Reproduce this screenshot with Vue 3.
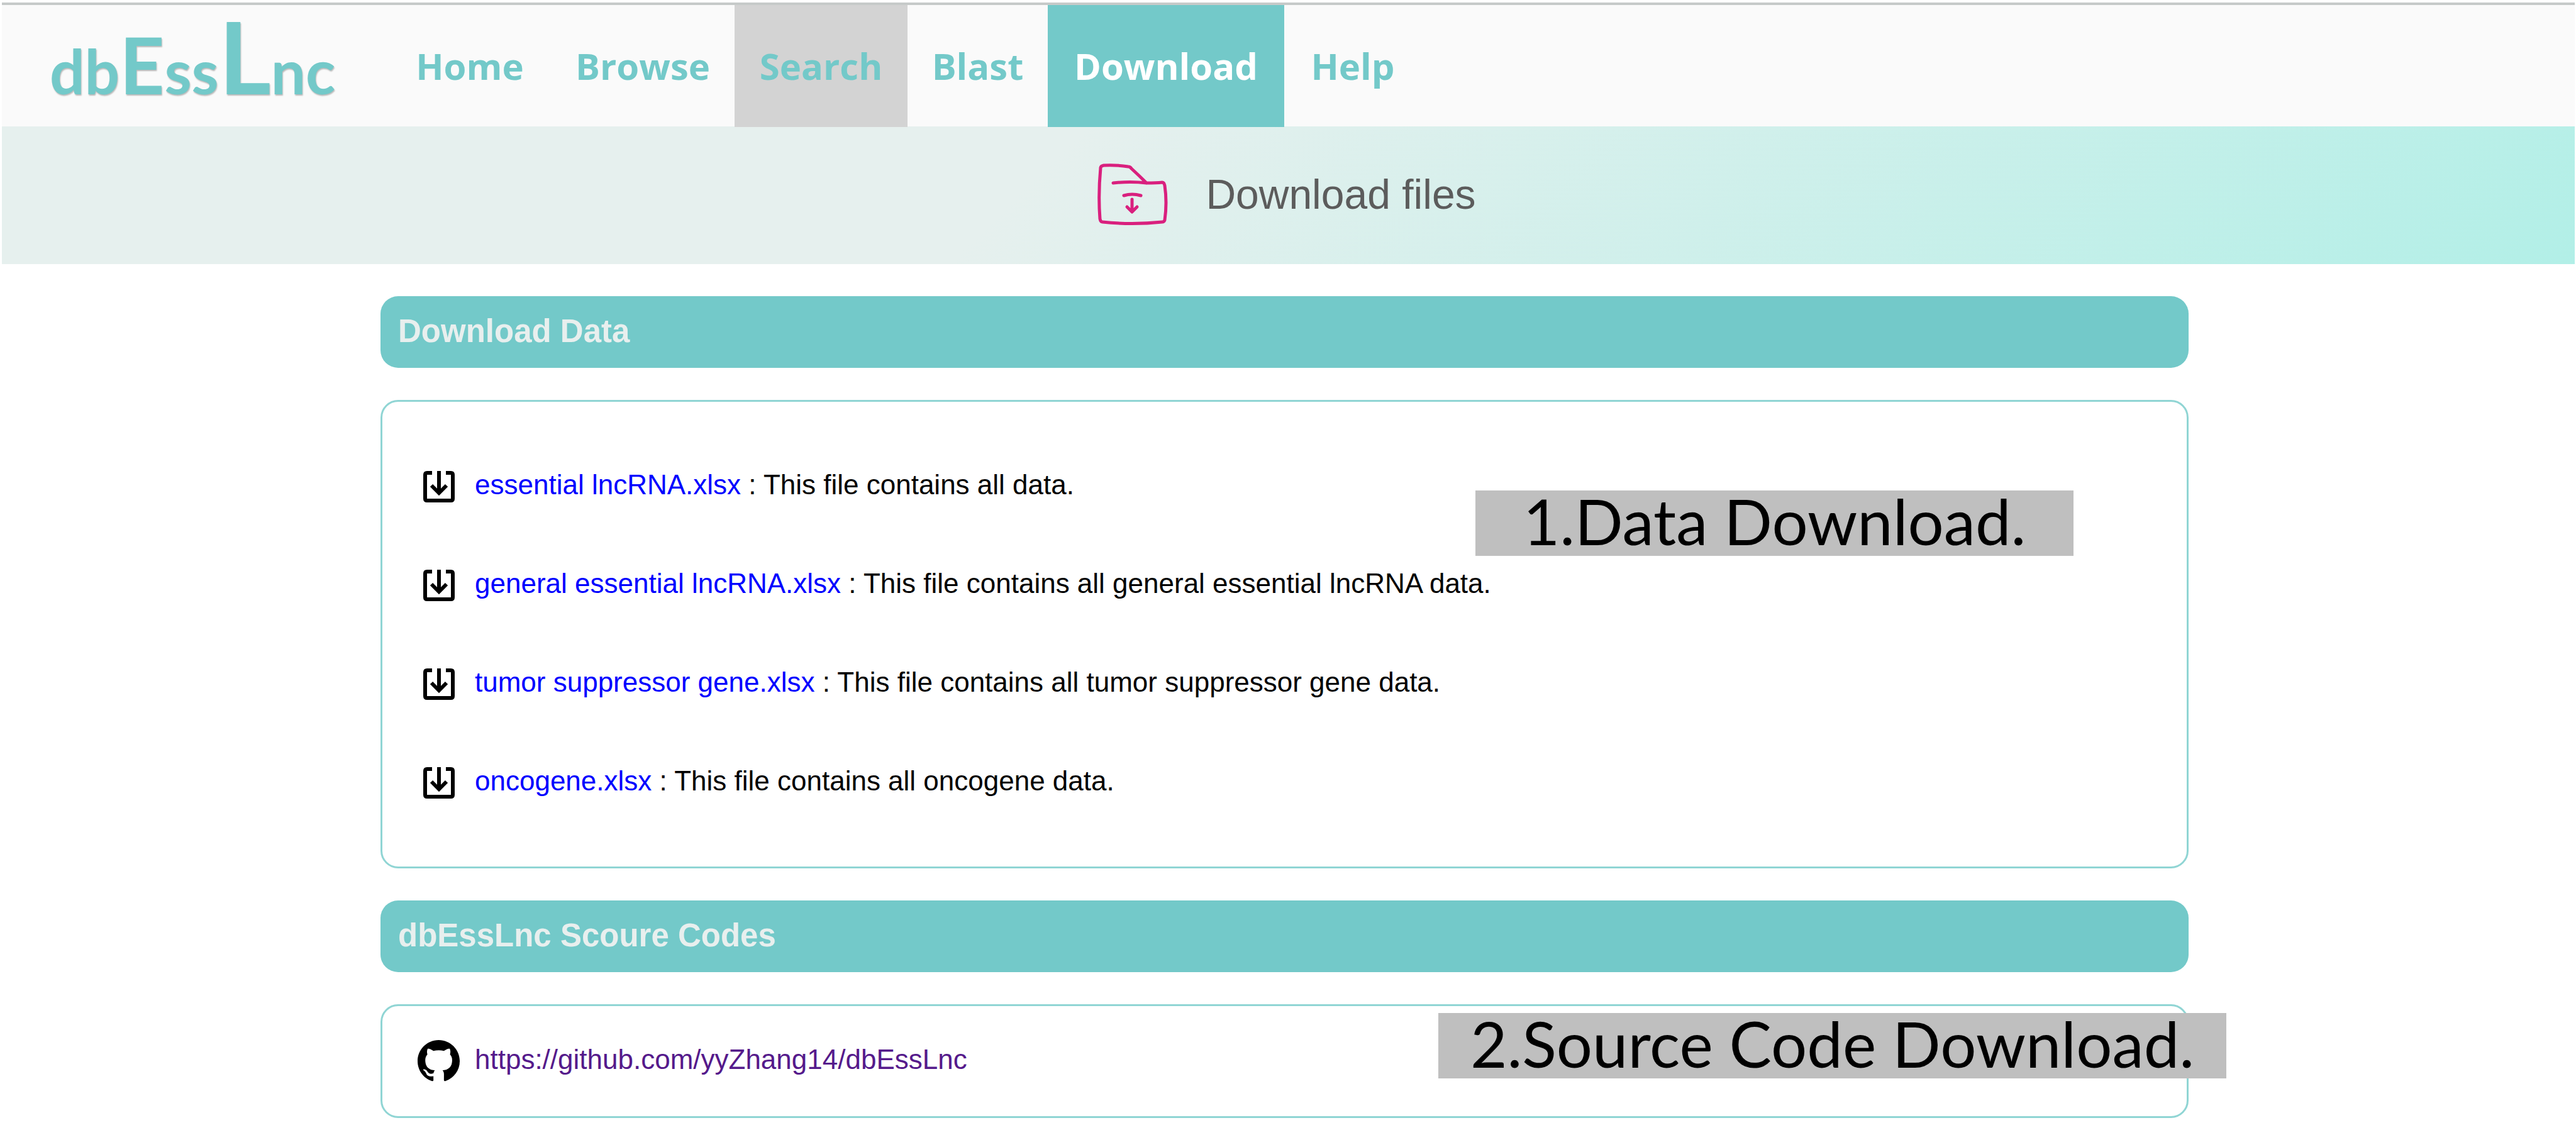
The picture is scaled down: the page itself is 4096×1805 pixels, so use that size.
<script setup>
const links = [
  { label: 'Home', state: '' },
  { label: 'Browse', state: '' },
  { label: 'Search', state: 'hovered' },
  { label: 'Blast', state: '' },
  { label: 'Download', state: 'active' },
  { label: 'Help', state: '' },
]

const files = [
  { name: 'essential lncRNA.xlsx', text: 'This file contains all data.' },
  { name: 'general essential lncRNA.xlsx', text: 'This file contains all general essential lncRNA data.' },
  { name: 'tumor suppressor gene.xlsx', text: 'This file contains all tumor suppressor gene data.' },
  { name: 'oncogene.xlsx', text: 'This file contains all oncogene data.' },
]
</script>

<template>
  <div class="page">
    <header class="topbar">
      <a class="logo" href="#" aria-label="dbEssLnc">
        <span>db</span><span class="tall">E</span><span>ss</span><span class="cap">L</span><span>nc</span>
      </a>
      <nav class="menu">
        <a v-for="link in links" :key="link.label" href="#" :class="link.state">{{ link.label }}</a>
      </nav>
    </header>

    <div class="banner">
      <svg class="folder" viewBox="0 0 112 98" aria-hidden="true">
        <path d="M25 31Q52 28 78 31Q94 31 103 30Q106 30 107 35Q111 62 107 90Q106 93 103 93Q55 98 8 93Q5 93 4 88Q1 50 5 7Q5 4 10 3Q30 2 49 5Q52 5 54 8Q66 19 78 31" />
        <path d="M42 51Q55 47 69 51M55 57V76M47 69L55 77L63 69" />
      </svg>
      <h1>Download files</h1>
    </div>

    <main class="content">
      <h2>Download Data</h2>
      <section class="card">
        <ul>
          <li v-for="file in files" :key="file.name" class="row">
            <span class="icon">
              <svg class="save" viewBox="0 0 50 50" aria-hidden="true">
                <path d="M14 3H6Q3 3 3 6V44Q3 47 6 47H44Q47 47 47 44V6Q47 3 44 3H36M25 0V35M13 23L25 35L37 23" />
              </svg>
            </span>
            <p><a href="#">{{ file.name }}</a> : {{ file.text }}</p>
          </li>
        </ul>
        <div class="note note-data">1.Data Download.</div>
      </section>

      <h2>dbEssLnc Scoure Codes</h2>
      <section class="card card-code">
        <div class="row">
          <span class="icon">
            <svg class="github" viewBox="0 0 16 16" aria-hidden="true">
              <path d="M8 0C3.58 0 0 3.58 0 8c0 3.54 2.29 6.53 5.47 7.59.4.07.55-.17.55-.38 0-.19-.01-.82-.01-1.49-2.01.37-2.53-.49-2.69-.94-.09-.23-.48-.94-.82-1.13-.28-.15-.68-.52-.01-.53.63-.01 1.08.58 1.23.82.72 1.21 1.87.87 2.33.66.07-.52.28-.87.51-1.07-1.78-.2-3.64-.89-3.64-3.95 0-.87.31-1.59.82-2.15-.08-.2-.36-1.02.08-2.12 0 0 .67-.21 2.2.82.64-.18 1.32-.27 2-.27s1.36.09 2 .27c1.53-1.04 2.2-.82 2.2-.82.44 1.1.16 1.92.08 2.12.51.56.82 1.27.82 2.15 0 3.07-1.87 3.75-3.65 3.95.29.25.54.73.54 1.48 0 1.07-.01 1.93-.01 2.2 0 .21.15.46.55.38A8.01 8.01 0 0 0 16 8c0-4.42-3.58-8-8-8z" />
            </svg>
          </span>
          <p><a class="visited" href="#">https://github.com/yyZhang14/dbEssLnc</a></p>
        </div>
        <div class="note note-code">2.Source Code Download.</div>
      </section>
    </main>
  </div>
</template>

<style>
body {
  margin: 0;
  background: #fff;
}
</style>

<style scoped>
.page {
  padding: 4px 2px 24px 3px;
  font-family: "Liberation Sans", Arial, sans-serif;
  color: #000;
}

a {
  text-decoration: none;
}

.topbar {
  display: flex;
  height: 193px;
  border-top: 4px solid #c6cac9;
  background: #fafafa;
}

.logo {
  box-sizing: border-box;
  width: 615px;
  padding-left: 76px;
  font-family: Lato, sans-serif;
  font-size: 98px;
  font-weight: 700;
  line-height: 160px;
  white-space: nowrap;
  color: #73c9c9;
  text-shadow: 1px 2px 2px #b9b9b9;
}

.logo .tall {
  font-size: 124px;
}

.logo .cap {
  font-size: 160px;
}

.menu {
  display: grid;
  grid-template-columns: 258px 292px 275px 223px 376px 218px;
  font-family: "Open Sans", "Noto Sans", sans-serif;
  font-size: 58px;
  font-weight: 700;
  line-height: 194px;
  text-align: center;
}

.menu a {
  color: #73c9c9;
}

.menu .hovered {
  background: #d3d3d3;
}

.menu .active {
  background: #73c9c9;
  color: #fff;
}

.banner {
  display: flex;
  align-items: center;
  justify-content: center;
  gap: 60px;
  box-sizing: border-box;
  height: 219px;
  padding: 0 5px 3px 0;
  background: linear-gradient(135deg, #e6f0ee 40%, #b2efe7);
}

.folder {
  width: 112px;
  height: 98px;
  fill: none;
  stroke: #d9207e;
  stroke-width: 5;
  stroke-linecap: round;
  stroke-linejoin: round;
}

h1 {
  margin: 0;
  font-size: 66px;
  font-weight: 400;
  line-height: 76px;
  color: #5c5c5c;
}

.content {
  display: flex;
  flex-direction: column;
  gap: 51px;
  padding: 51px 614px 0 602px;
}

h2 {
  box-sizing: border-box;
  height: 114px;
  margin: 0;
  padding: 0 28px;
  border-radius: 28px;
  background: #73c9c9;
  font-size: 51px;
  font-weight: 700;
  line-height: 112px;
  color: #e8efee;
}

.card {
  position: relative;
  padding: 56px 32px 55px;
  border: 3px solid #90d5d4;
  border-radius: 28px;
}

.card-code {
  padding-top: 9px;
  padding-bottom: 9px;
}

ul {
  margin: 0;
  padding: 0;
  list-style: none;
}

.row {
  display: flex;
  align-items: center;
  height: 157px;
}

.icon {
  display: flex;
  justify-content: center;
  width: 115px;
}

.save {
  width: 50px;
  height: 50px;
  fill: none;
  stroke: #000;
  stroke-width: 6;
}

.github {
  width: 67px;
  height: 67px;
}

p {
  margin: 0;
  padding-bottom: 6px;
  font-size: 44px;
  line-height: 50px;
  white-space: nowrap;
}

p a {
  color: #00f;
}

p .visited {
  color: #551a8b;
}

.note {
  position: absolute;
  height: 104px;
  background: #bfbfbf;
  font-family: Lato, sans-serif;
  font-size: 101px;
  line-height: 96px;
  text-align: center;
  white-space: nowrap;
}

.note-data {
  top: 141px;
  right: 180px;
  width: 951px;
}

.note-code {
  top: 11px;
  right: -63px;
  width: 1253px;
}
</style>
